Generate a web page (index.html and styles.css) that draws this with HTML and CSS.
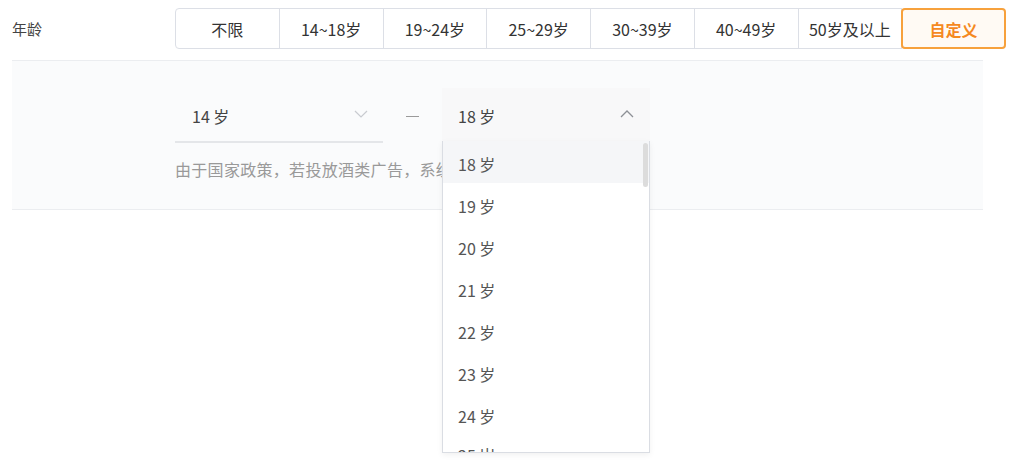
FILE: index.html
```html
<!DOCTYPE html>
<html lang="zh-CN">
<head>
    <meta charset="UTF-8">
    <meta name="viewport" content="width=device-width, initial-scale=1.0">
    <title>年龄定向</title>
    <link rel="stylesheet" href="styles.css">
</head>
<body>
    <div class="age-row">
        <div class="label">年龄</div>
        <div class="options">
            <button class="opt">不限</button>
            <button class="opt">14~18岁</button>
            <button class="opt">19~24岁</button>
            <button class="opt">25~29岁</button>
            <button class="opt">30~39岁</button>
            <button class="opt">40~49岁</button>
            <button class="opt">50岁及以上</button>
            <button class="opt active">自定义</button>
        </div>
    </div>

    <div class="panel">
        <div class="range">
            <div class="select">
                <span>14 岁</span>
                <svg class="arrow" width="14" height="8" viewBox="0 0 14 8"><path d="M1 1l6 6 6-6" fill="none" stroke="#c8cbd0" stroke-width="1.2"/></svg>
            </div>
            <div class="dash"></div>
            <div class="select open">
                <span>18 岁</span>
                <svg class="arrow" width="14" height="8" viewBox="0 0 14 8"><path d="M1 7l6-6 6 6" fill="none" stroke="#8d9096" stroke-width="1.3"/></svg>
                <div class="dropdown">
                    <div class="scrollbar"></div>
                    <div class="item hover">18 岁</div>
                    <div class="item">19 岁</div>
                    <div class="item">20 岁</div>
                    <div class="item">21 岁</div>
                    <div class="item">22 岁</div>
                    <div class="item">23 岁</div>
                    <div class="item">24 岁</div>
                    <div class="item">25 岁</div>
                </div>
            </div>
        </div>
        <p class="tip">由于国家政策，若投放酒类广告，系统将自动过滤未满18岁的用户</p>
    </div>
</body>
</html>
```

FILE: styles.css
```css
html, body {
    margin: 0;
    min-height: 100vh;
    background: #fff;
    font-family: "Noto Sans CJK SC", "Microsoft YaHei", sans-serif;
    color: #333;
}

.age-row {
    display: flex;
    align-items: center;
    padding: 8px 0 0 12px;
}

.label {
    width: 163px;
    font-size: 15px;
    color: #444;
}

.options {
    display: flex;
}

.opt {
    width: 104.75px;
    height: 41px;
    margin-left: -1px;
    border: 1px solid #dcdfe6;
    background: #fff;
    font-family: inherit;
    font-size: 16px;
    color: #333;
    padding: 0;
    cursor: pointer;
}

.opt:first-child {
    margin-left: 0;
    border-radius: 4px 0 0 4px;
}

.opt.active {
    position: relative;
    border: 2px solid #f7a13c;
    border-radius: 4px;
    background: #fffaf4;
    color: #f5891f;
    font-weight: bold;
    font-size: 16px;
}

.panel {
    width: 971px;
    margin: 11px 0 0 12px;
    background: #fafbfc;
    border-top: 1px solid #ebedf0;
    border-bottom: 1px solid #ebedf0;
    padding: 27px 0 28px 163px;
    box-sizing: border-box;
    height: 150px;
}

.range {
    display: flex;
    align-items: stretch;
}

.select {
    position: relative;
    width: 208px;
    height: 55px;
    box-sizing: border-box;
    border-bottom: 2px solid #e4e6e9;
    display: flex;
    align-items: center;
    justify-content: space-between;
    padding: 3px 15px 0 17px;
    font-size: 16px;
    color: #444;
}

.select.open {
    background: #f8f8f9;
    border-bottom-color: #f7931e;
    padding-left: 16px;
    padding-right: 16px;
}

.arrow {
    margin-top: -4px;
}

.dash {
    width: 59px;
    display: flex;
    align-items: center;
    justify-content: center;
}

.dash::before {
    content: '';
    width: 13px;
    height: 1.5px;
    margin-top: 2px;
    background: #9a9a9a;
}

.dropdown {
    position: absolute;
    top: 100%;
    left: 0;
    z-index: 10;
    width: 208px;
    height: 312px;
    box-sizing: border-box;
    background: #fff;
    border: 1px solid #dadde3;
    border-top: none;
    overflow: hidden;
    box-shadow: 0 2px 6px rgba(0,0,0,0.06);
}

.scrollbar {
    position: absolute;
    right: 1px;
    top: 2px;
    width: 5px;
    height: 44px;
    border-radius: 3px;
    background: #dcdcdc;
}

.item {
    height: 42px;
    line-height: 46px;
    padding-left: 15px;
    font-size: 16px;
    color: #555;
}

.item:last-child {
    line-height: 40px;
}

.item.hover {
    background: #f5f6f8;
}

.tip {
    margin: 15px 0 0 0;
    font-size: 16px;
    letter-spacing: 0.3px;
    line-height: 22px;
    color: #999;
    white-space: nowrap;
}
```
